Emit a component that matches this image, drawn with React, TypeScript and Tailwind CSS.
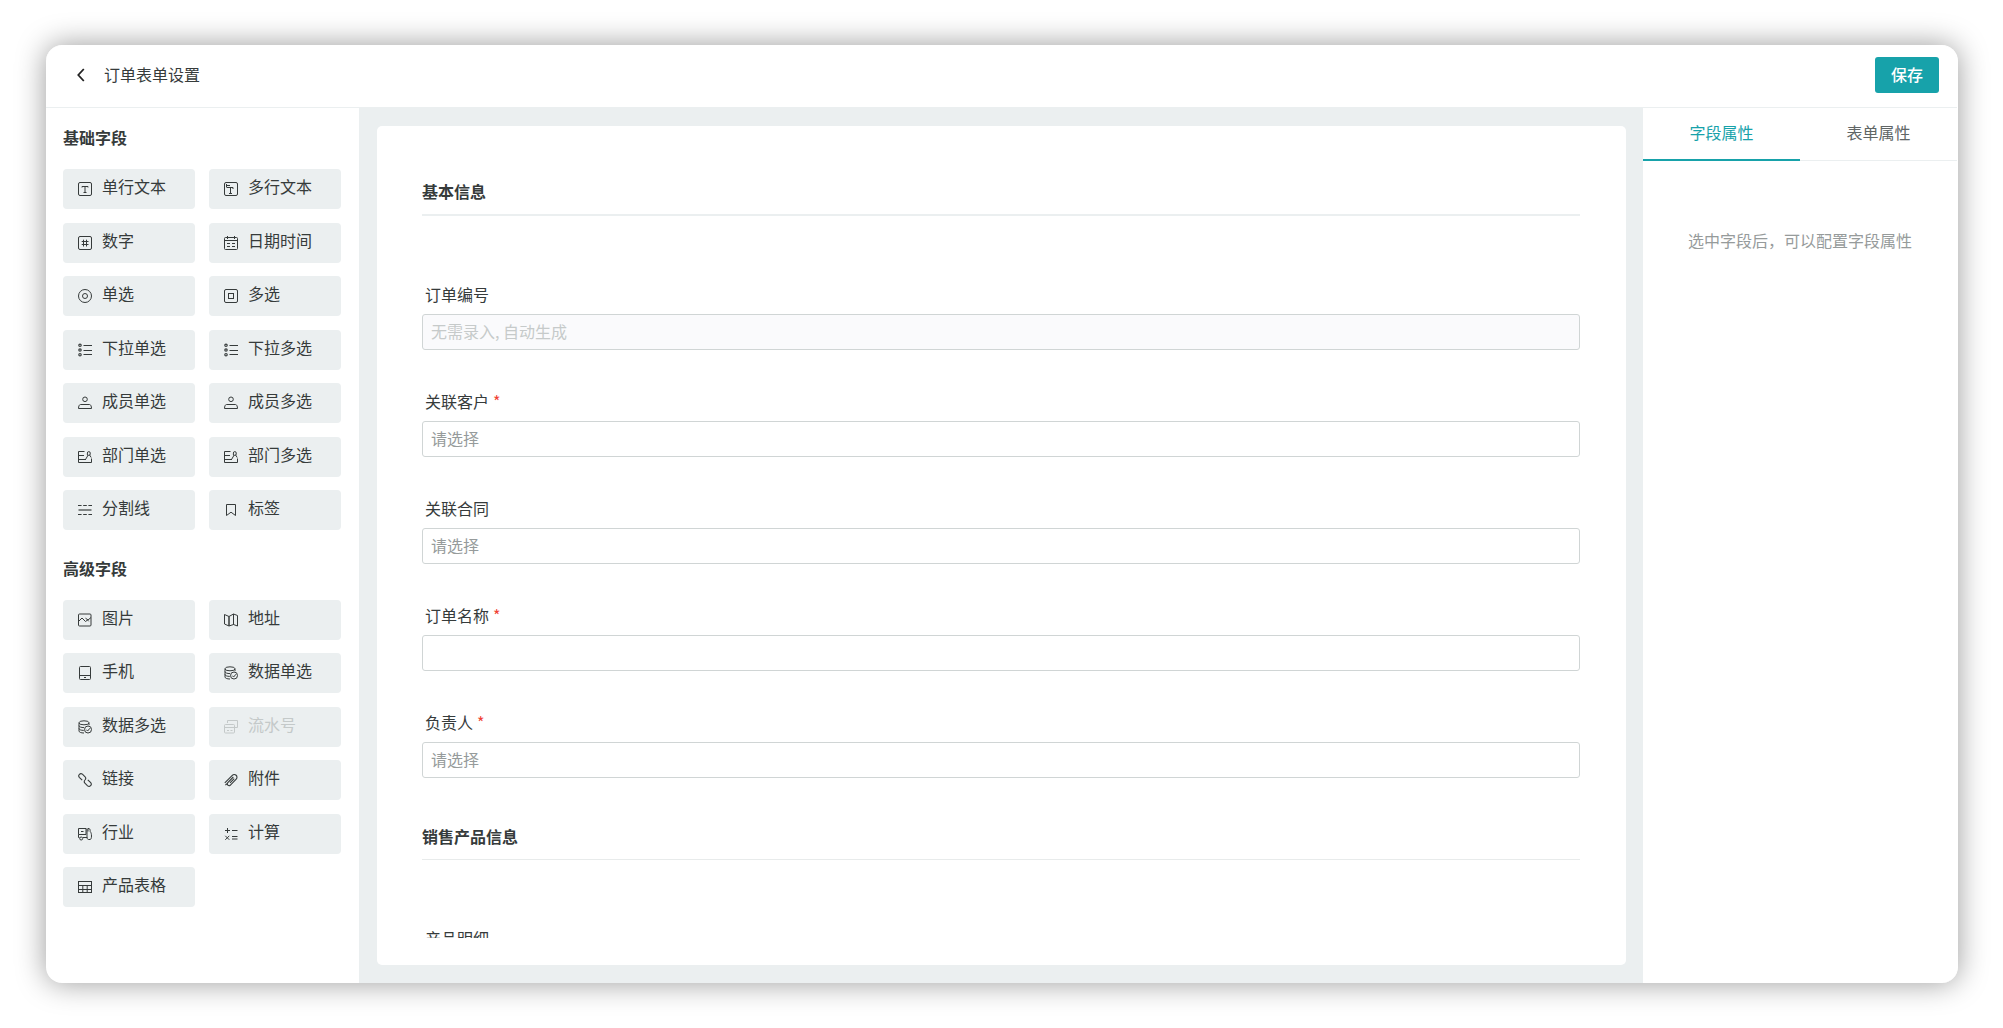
import { useState } from 'react'
import type { ReactNode } from 'react'

interface FieldType {
  label: string
  icon: ReactNode
  disabled?: boolean
}

interface FormField {
  id: string
  label: string
  placeholder?: string
  required?: boolean
  disabled?: boolean
}

const dropdownIcon = (
  <>
    <circle cx="2" cy="2.3" r="1.2" strokeWidth="1.2"/>
    <circle cx="2" cy="7" r="1.2" strokeWidth="1.2"/>
    <circle cx="2" cy="11.7" r="1.2" strokeWidth="1.2"/>
    <path d="M5.5 2.5H14M5.5 7.5H14M5.5 11.5H14"/>
  </>
)

const memberIcon = (
  <>
    <circle cx="7" cy="3.3" r="2.3"/>
    <path d="M2.5 8.5h9c1.2 0 2 1.8 2 4H.5c0-2.2.8-4 2-4z" strokeLinejoin="round"/>
  </>
)

const departmentIcon = (
  <>
    <path d="M6.5 1.5H.5v11h13V8.5"/>
    <path d="M.5 5.5H6M.5 9.5H8"/>
    <path d="M7.5 9.5L10 5.3M13.2 7.5L11.3 4.5"/>
    <path d="M9.4 5V3a1.4 1.4 0 012.8 0v1.5c0 .6-1.2 1-2.8.9"/>
  </>
)

const databaseIcon = (
  <>
    <ellipse cx="6" cy="2.8" rx="5" ry="2"/>
    <path d="M1 2.8V11c0 1.2 2 2 5 2M11 2.8v2.4M1 5.6c0 1.2 2.2 2 5 2M1 8.4c0 1.2 2 2 4.8 2"/>
    <circle cx="10" cy="9.5" r="3.5"/>
    <path d="M8.2 9.6l1.4 1.4 2.4-2.8"/>
  </>
)

const basicFields: FieldType[] = [
  { label: '单行文本', icon: <><rect x=".5" y=".5" width="13" height="13" rx="1.5"/><path d="M4 5.5v-1h6v1M7 4.5v5.5M5.5 10.5h3"/></> },
  { label: '多行文本', icon: <><rect x=".5" y=".5" width="13" height="13" rx="1.5"/><path d="M2 3.5h4M2.5 2v3.5M3 5.5h6V7M6.5 5.5v6M5 11.5h3"/></> },
  { label: '数字', icon: <><rect x=".5" y=".5" width="13" height="13" rx="1.5"/><path d="M5.5 3.7v6.8M8.5 3.7v6.8M3.7 5.5h6.8M3.7 8.5h6.8"/></> },
  { label: '日期时间', icon: <><rect x=".5" y="1.5" width="13" height="12" rx="1"/><path d="M.5 4.5h13M3.5 0v3M10.5 0v3M3 7.5h3M8 7.5h3M3 10.5h3M8 10.5h3"/></> },
  { label: '单选', icon: <><circle cx="7" cy="7" r="6.5"/><circle cx="7" cy="7" r="2.5"/></> },
  { label: '多选', icon: <><rect x=".5" y=".5" width="13" height="13" rx="1.5"/><rect x="4.5" y="4.5" width="5" height="5"/></> },
  { label: '下拉单选', icon: dropdownIcon },
  { label: '下拉多选', icon: dropdownIcon },
  { label: '成员单选', icon: memberIcon },
  { label: '成员多选', icon: memberIcon },
  { label: '部门单选', icon: departmentIcon },
  { label: '部门多选', icon: departmentIcon },
  { label: '分割线', icon: <><path d="M0 2.5h14M0 11.5h14" strokeDasharray="3.6 1.6"/><path d="M.5 7h13" strokeWidth="1.2"/></> },
  { label: '标签', icon: <path d="M2.5 1.5h9v11L7 9.2l-4.5 3.3z"/> },
]

const advancedFields: FieldType[] = [
  { label: '图片', icon: <><rect x=".5" y="1" width="12.5" height="12" rx="1"/><path d="M.5 8.5L4 5l3.5 3.5L9.5 7l1.2 1.3M7.5 5.2L10 7l3-2.5"/></> },
  { label: '地址', icon: <path d="M.5 1.5l4.5 2V13L.5 11zM5 3.5l4.5-2.5v10.5L5 13zM9.5 1l4 1.5V13l-4-1.5z"/> },
  { label: '手机', icon: <><rect x="1.5" y=".5" width="11" height="13" rx="1"/><path d="M1.5 9.5h11M6 11.5h2"/></> },
  { label: '数据单选', icon: databaseIcon },
  { label: '数据多选', icon: databaseIcon },
  { label: '流水号', disabled: true, icon: <><path d="M3.5 3V.5h10v7H11"/><rect x=".5" y="4.5" width="10" height="8.5" rx="1"/><path d="M.5 7.5h10M3 10.5h2M6.5 10.5h2"/></> },
  { label: '链接', icon: <g strokeWidth="1.1"><path d="M4.2 7.2L1.3 4.3A2.2 2.2 0 014.4 1.2l2.7 2.7c.9.9.8 2-.1 2.9"/><path d="M9.8 6.8l2.9 2.9a2.2 2.2 0 01-3.1 3.1l-2.7-2.7c-.9-.9-.8-2 .1-2.9"/></g> },
  { label: '附件', icon: <path strokeWidth="1.1" d="M.8 9.8L8.3 2.3a2.7 2.7 0 013.9 3.8l-5.8 6a1.8 1.8 0 01-2.6-2.5L9.3 4M6 9.8l4.2-4.2M1.4 12.2L3 10.6"/> },
  { label: '行业', icon: <><path d="M.5 1.5h7.5v6H.5zM.5 10.5v-3M.5 10.5h1M5 10.5h4V1.5M3 4.5h2.5"/><circle cx="3.2" cy="11.5" r="1.5"/><path d="M10 4.5V1.5h1c1.2.3 1.2 2 1.2 3 .9 1 1.3 2.5 1.3 4.5 0 2-.5 3.5-1.5 3.5h-1.5c-1 0-1.5-1-1.5-2.5"/></> },
  { label: '计算', icon: <path d="M1 3.5h5M3.5 1v5M8 3.5h5.5M1.3 8.8l4 4M5.3 8.8l-4 4M8 9.5h5.5M8 12h5.5"/> },
  { label: '产品表格', icon: <><rect x=".5" y="1.5" width="13" height="11"/><path d="M.5 5.5h13M.5 9.5h13M4.8 5.5v7M9.2 5.5v7"/></> },
]

const formFields: FormField[] = [
  { id: 'orderNo', label: '订单编号', placeholder: '无需录入, 自动生成', disabled: true },
  { id: 'customer', label: '关联客户', placeholder: '请选择', required: true },
  { id: 'contract', label: '关联合同', placeholder: '请选择' },
  { id: 'orderName', label: '订单名称', required: true },
  { id: 'owner', label: '负责人', placeholder: '请选择', required: true },
]

function FieldButton({ field }: { field: FieldType }) {
  return (
    <button
      type="button"
      disabled={field.disabled}
      className="flex h-10 items-center gap-[10px] rounded bg-[#ebeff0] px-[15px] text-[#363b3b] disabled:text-[#c4c9c9]"
    >
      <svg width="14" height="14" viewBox="0 0 14 14" fill="none" stroke="currentColor" className="shrink-0">
        {field.icon}
      </svg>
      <span className="pb-[6px] leading-6">{field.label}</span>
    </button>
  )
}

function FormRow({ field }: { field: FormField }) {
  return (
    <div className="flex flex-col gap-2">
      <label htmlFor={field.id} className="flex gap-1 pl-[3px] leading-6">
        {field.label}
        {field.required && <span className="text-[#f04134]">*</span>}
      </label>
      <input
        id={field.id}
        type="text"
        placeholder={field.placeholder}
        disabled={field.disabled}
        className="h-9 w-full rounded-[3px] border border-[#d0d5d5] bg-white px-2 pb-[2px] placeholder:text-[#969b9b] focus:border-[#17a2aa] focus:outline-none disabled:bg-[#fafafc] disabled:placeholder:text-[#c6caca]"
      />
    </div>
  )
}

export default function App() {
  const [tab, setTab] = useState<'field' | 'form'>('field')

  const tabClass = (active: boolean) =>
    active
      ? 'flex-1 border-b-2 border-[#17a2aa] pb-1 text-[#17a2aa]'
      : 'flex-1 border-b border-[#ebeff0] pb-[5px] text-[#606666]'

  return (
    <div className="h-screen bg-white py-[45px] pr-[45px] pl-[46px] font-['Noto_Sans_CJK_SC',sans-serif] text-base text-[#363b3b]">
      <div className="flex h-full flex-col overflow-hidden rounded-2xl border border-b-0 border-l-0 border-white bg-white shadow-[0_0_30px_rgba(0,0,0,0.4)]">
        <header className="flex h-[62px] shrink-0 items-center border-b border-[#ebeff0] pr-[18px] pb-1 pl-[27px]">
          <button type="button" aria-label="返回" className="text-[#222]">
            <svg width="16" height="16" viewBox="0 0 16 16" fill="none">
              <path d="M10.8 2L5.3 8l5.5 6" stroke="currentColor" strokeWidth="1.8"/>
            </svg>
          </button>
          <h1 className="ml-[15px] flex-1 pb-[2px] leading-6">订单表单设置</h1>
          <button type="button" className="h-9 rounded-[3px] bg-[#17a2aa] px-4 pb-[2px] font-medium text-white">保存</button>
        </header>

        <div className="flex min-h-0 flex-1">
          <aside className="w-[313px] shrink-0 overflow-hidden px-[17px] pt-[17px]">
            <h2 className="leading-6 font-bold">基础字段</h2>
            <div className="mt-5 grid h-[361px] grid-cols-[132px_132px] content-between gap-x-[14px]">
              {basicFields.map(f => <FieldButton key={f.label} field={f}/>)}
            </div>
            <h2 className="mt-[26px] leading-6 font-bold">高级字段</h2>
            <div className="mt-5 grid h-[307px] grid-cols-[132px_132px] content-between gap-x-[14px]">
              {advancedFields.map(f => <FieldButton key={f.label} field={f}/>)}
            </div>
          </aside>

          <main className="min-w-0 flex-1 bg-[#ebeff0] p-[18px] pr-[17px]">
            <div className="h-full rounded-[5px] bg-white pr-[46px] pb-[27px] pl-[45px]">
              <div className="h-full overflow-hidden pt-[53px]">
                <h2 className="border-b-2 border-[#ebeff0] pb-[11px] leading-6 font-bold">基本信息</h2>
                <div className="mt-[66px] flex flex-col gap-[39px]">
                  {formFields.map(f => <FormRow key={f.id} field={f}/>)}
                </div>
                <h2 className="mt-[46px] border-b border-[#e8ebeb] pb-[11px] leading-6 font-bold">销售产品信息</h2>
                <p className="mt-[66px] pl-[3px] leading-6">产品明细</p>
              </div>
            </div>
          </main>

          <aside className="w-[314px] shrink-0">
            <div role="tablist" className="flex h-[53px]">
              <button type="button" role="tab" aria-selected={tab === 'field'} className={tabClass(tab === 'field')} onClick={() => setTab('field')}>
                字段属性
              </button>
              <button type="button" role="tab" aria-selected={tab === 'form'} className={tabClass(tab === 'form')} onClick={() => setTab('form')}>
                表单属性
              </button>
            </div>
            <p className="mt-[67px] text-center leading-6 text-[#969b9b]">选中字段后，可以配置字段属性</p>
          </aside>
        </div>
      </div>
    </div>
  )
}
